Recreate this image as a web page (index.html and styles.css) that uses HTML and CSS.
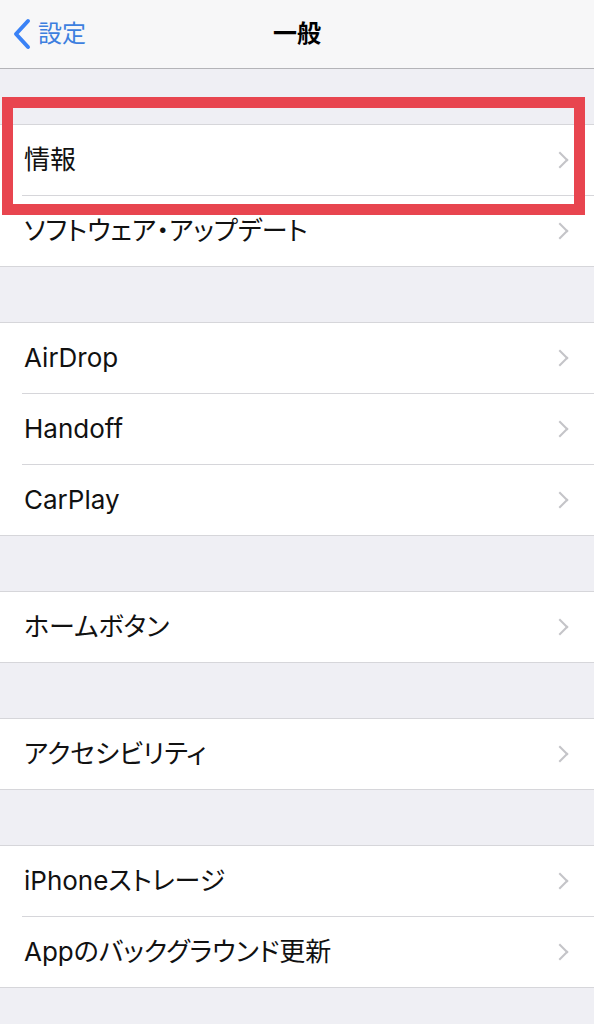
FILE: index.html
```html
<!DOCTYPE html>
<html lang="ja">
<head>
    <meta charset="UTF-8">
    <meta name="viewport" content="width=device-width, initial-scale=1.0">
    <title>一般</title>
    <link rel="stylesheet" href="styles.css">
</head>
<body>
    <header class="nav">
        <a class="nav-back" href="#">
            <svg class="nav-chevron" width="20" height="32" viewBox="0 0 20 32">
                <path d="M16 3 L4 16 L16 29" fill="none" stroke="#3a82f6" stroke-width="4" stroke-linecap="round" stroke-linejoin="round"/>
            </svg>
            <span>設定</span>
        </a>
        <h1 class="nav-title">一般</h1>
    </header>

    <main class="content">
        <section class="group">
            <a class="row" href="#"><span class="label">情報</span><span class="chevron"></span></a>
            <a class="row" href="#"><span class="label">ソフトウェア・アップデート</span><span class="chevron"></span></a>
        </section>

        <section class="group">
            <a class="row" href="#"><span class="label">AirDrop</span><span class="chevron"></span></a>
            <a class="row" href="#"><span class="label">Handoff</span><span class="chevron"></span></a>
            <a class="row" href="#"><span class="label">CarPlay</span><span class="chevron"></span></a>
        </section>

        <section class="group">
            <a class="row" href="#"><span class="label">ホームボタン</span><span class="chevron"></span></a>
        </section>

        <section class="group">
            <a class="row" href="#"><span class="label">アクセシビリティ</span><span class="chevron"></span></a>
        </section>

        <section class="group">
            <a class="row" href="#"><span class="label">iPhoneストレージ</span><span class="chevron"></span></a>
            <a class="row" href="#"><span class="label">Appのバックグラウンド更新</span><span class="chevron"></span></a>
        </section>
    </main>

    <!-- 注目枠 -->
    <div class="highlight"></div>
</body>
</html>
```

FILE: styles.css
```css
body {
    margin: 0;
    background-color: #efeff4;
    font-family: 'Inter', 'Noto Sans CJK JP', sans-serif;
    color: #111;
    position: relative;
    min-height: 1024px;
}
a {
    color: inherit;
    text-decoration: none;
}

/* ナビゲーションバー */
.nav {
    height: 68px;
    background-color: #f7f7f8;
    border-bottom: 1px solid #b4b4b8;
    display: flex;
    align-items: center;
    justify-content: center;
    position: relative;
}
.nav-back {
    position: absolute;
    left: 12px;
    top: 0;
    height: 68px;
    display: flex;
    align-items: center;
    gap: 6px;
    color: #3d7fdf;
    font-size: 24px;
    line-height: 30px;
}
.nav-chevron {
    display: block;
}
.nav-title {
    margin: 0;
    font-size: 24px;
    line-height: 30px;
    font-weight: 700;
    color: #000;
}

/* リスト */
.content {
    padding-top: 55px;
    display: flex;
    flex-direction: column;
    gap: 55px;
}
.group {
    background-color: #fff;
    border-top: 1px solid #d6d6da;
    border-bottom: 1px solid #d6d6da;
}
.row {
    height: 70px;
    margin-left: 22px;
    padding-left: 2px;
    padding-right: 26px;
    display: flex;
    align-items: center;
    justify-content: space-between;
    font-size: 26px;
    line-height: 32px;
    font-feature-settings: "palt";
}
.row + .row {
    border-top: 1px solid #d6d6da;
}
.chevron {
    width: 10px;
    height: 10px;
    border-top: 2px solid #c4c4c8;
    border-right: 2px solid #c4c4c8;
    transform: rotate(45deg);
    margin-right: 2px;
}

/* 赤枠 */
.highlight {
    position: absolute;
    left: 2px;
    top: 97px;
    width: 561px;
    height: 96px;
    border: 11px solid #e8454f;
}
```
